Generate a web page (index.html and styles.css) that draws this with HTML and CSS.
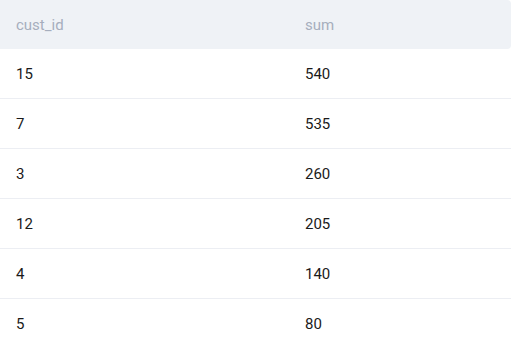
FILE: index.html
```html
<!DOCTYPE html>
<html lang="en">
  <head>
    <meta charset="UTF-8" />
    <meta name="viewport" content="width=device-width, initial-scale=1.0" />
    <title>Result</title>
    <link rel="stylesheet" href="styles.css">
  </head>
  <body>
    <div class="result-table">
      <div class="row header">
        <div class="cell">cust_id</div>
        <div class="cell">sum</div>
      </div>
      <div class="row">
        <div class="cell">15</div>
        <div class="cell">540</div>
      </div>
      <div class="row">
        <div class="cell">7</div>
        <div class="cell">535</div>
      </div>
      <div class="row">
        <div class="cell">3</div>
        <div class="cell">260</div>
      </div>
      <div class="row">
        <div class="cell">12</div>
        <div class="cell">205</div>
      </div>
      <div class="row">
        <div class="cell">4</div>
        <div class="cell">140</div>
      </div>
      <div class="row last">
        <div class="cell">5</div>
        <div class="cell">80</div>
      </div>
    </div>
  </body>
</html>
```

FILE: styles.css
```css
body {
  margin: 0;
  background-color: #ffffff;
  font-family: Roboto, "Liberation Sans", sans-serif;
  font-size: 15px;
  color: #1a1a1a;
}

.result-table {
  width: 511px;
}

.row {
  display: grid;
  grid-template-columns: 289px 1fr;
  height: 49px;
  align-items: center;
  border-bottom: 1px solid #eceef3;
}

.row.header {
  height: 49px;
  border-bottom: none;
  background-color: #eff2f6;
  color: #a6aebd;
  border-radius: 0 4px 4px 0;
}

.row.last {
  border-bottom: none;
}

.cell {
  padding-left: 16px;
}
```
